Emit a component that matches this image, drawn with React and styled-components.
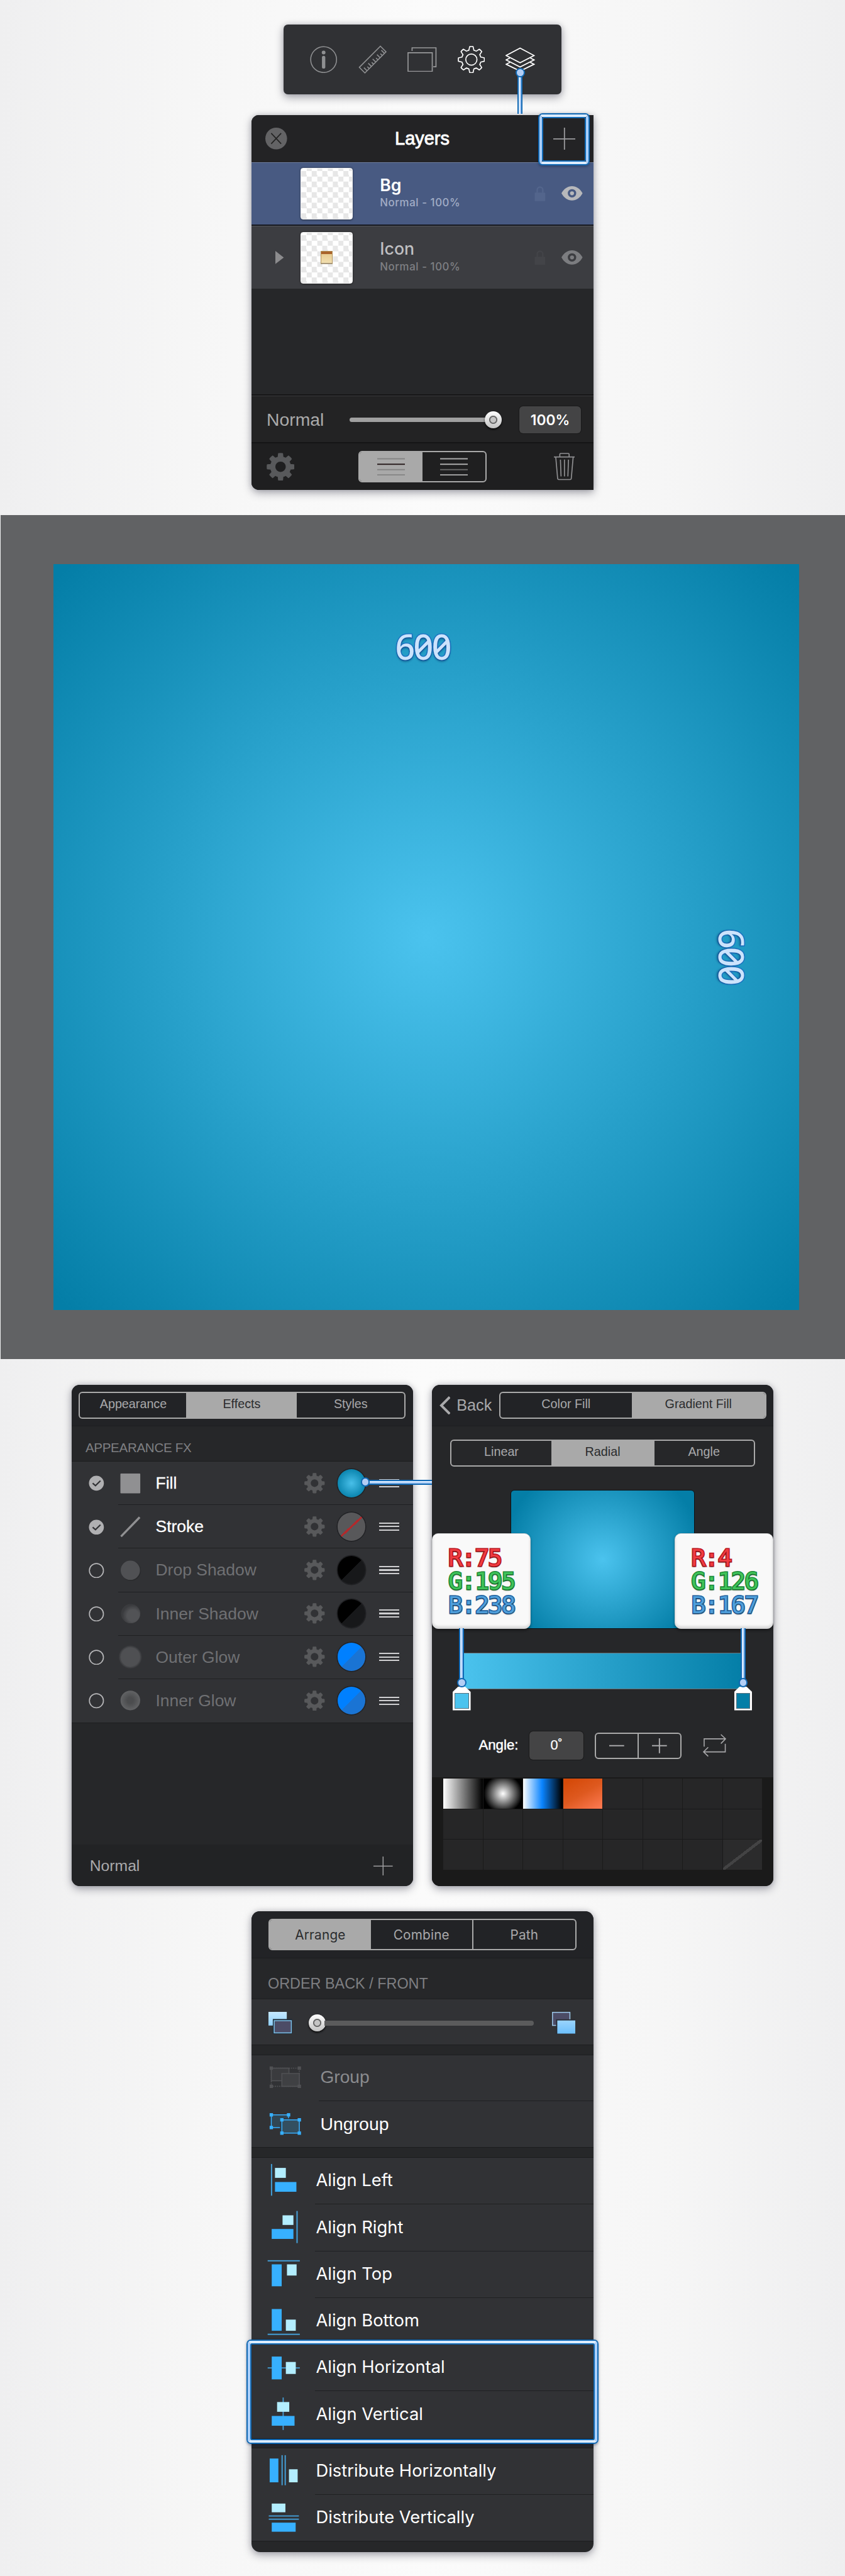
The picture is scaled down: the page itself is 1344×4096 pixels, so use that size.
import React from 'react';
import styled, { createGlobalStyle, css } from 'styled-components';

const HELV = '"Liberation Sans", Arial, sans-serif';
const INTER = 'Inter, "Open Sans", sans-serif';

const GlobalStyle = createGlobalStyle`
  html, body { margin: 0; padding: 0; background: #f6f6f6; }
  *, *::before, *::after { box-sizing: border-box; }
`;

const Page = styled.main`
  zoom: 0.98824;
  width: 1360px;
  height: 4145px;
  overflow: hidden;
  display: flex;
  flex-direction: column;
  background: linear-gradient(90deg, #efeff0 0%, #f6f6f6 22%, #fbfbfb 50%, #f6f6f6 78%, #efeff0 100%);
  font-family: ${HELV};
  color: #fff;
  white-space: nowrap;
  svg { display: block; flex: none; }
`;

/* ---------- shared parts ---------- */

const Panel = styled.section`
  position: relative;
  width: 550px;
  height: ${p => p.$h}px;
  flex: none;
  display: flex;
  flex-direction: column;
  background: #262729;
  border-radius: ${p => p.$radius || '13px'};
  box-shadow: 0 5px 14px rgba(20, 20, 40, 0.34), 0 0 9px rgba(20, 20, 40, 0.14);
`;

const Segmented = styled.div`
  display: flex;
  flex: none;
  width: ${p => p.$w}px;
  height: ${p => p.$h || 43.5}px;
  border: 2.05px solid #a9a9a9;
  border-radius: 6px;
  overflow: hidden;
  font-family: ${p => p.$font || HELV};
  font-size: ${p => p.$size || 20}px;
  letter-spacing: ${p => p.$track || 0}px;
`;

const Segment = styled.div`
  flex: ${p => p.$flex || '1 1 0'};
  display: flex;
  align-items: center;
  justify-content: center;
  padding-bottom: ${p => p.$lift ?? 3}px;
  background: ${p => (p.$on ? '#a9a9a9' : 'transparent')};
  color: ${p => (p.$on ? '#2b2c2e' : '#a9a9ab')};
  ${p => p.$divided && css`border-left: 2.05px solid #a9a9a9;`}
`;

const Highlight = styled.div`
  position: absolute;
  left: ${p => p.$x}px;
  top: ${p => p.$y}px;
  width: ${p => p.$w}px;
  height: ${p => p.$h}px;
  border: 2.05px solid #1068b3;
  border-radius: 7px;
  box-shadow: 0 2px 4px rgba(0, 20, 60, 0.35);
  pointer-events: none;
  &::before {
    content: '';
    position: absolute;
    inset: 0;
    border: 4.1px solid #a9cffb;
    border-top-color: #dcecff;
    border-bottom-color: #dcecff;
    border-radius: 5px;
  }
  &::after {
    content: '';
    position: absolute;
    inset: 4.05px;
    border: 2.05px solid #1068b3;
    border-radius: 3px;
  }
`;

const Connector = styled.div`
  position: absolute;
  z-index: 3;
  left: ${p => p.$x}px;
  top: ${p => p.$y}px;
  width: ${p => (p.$across ? p.$len : 8)}px;
  height: ${p => (p.$across ? 8 : p.$len)}px;
  background: linear-gradient(${p => (p.$across ? '180deg' : '90deg')},
    #1068b3 0 1.6px, #dcecff 1.6px 4px, #a6c9f6 4px 6.4px, #1068b3 6.4px 8px);
  &::before {
    content: '';
    position: absolute;
    width: 15px;
    height: 15px;
    border-radius: 50%;
    background: #b3cef5;
    border: 2.05px solid #1068b3;
    ${p => p.$across && css`left: -7px; top: -3.5px;`}
    ${p => !p.$across && css`left: -3.5px; ${p.$end ? 'bottom' : 'top'}: -7px;`}
  }
`;

const Knob = styled.div`
  width: 27px;
  height: 27px;
  flex: none;
  border-radius: 50%;
  background:
    radial-gradient(circle, #c4c4c4 0 4.2px, #6b6b6b 5px 6.3px, transparent 7px),
    linear-gradient(#ffffff, #c2c2c2);
  box-shadow: 0 2px 3px rgba(0, 0, 0, 0.8);
`;

function gearPath(cx, cy, outer, inner, tip, base) {
  const pt = (r, a) => `${(cx + r * Math.sin(a)).toFixed(2)} ${(cy - r * Math.cos(a)).toFixed(2)}`;
  let d = '';
  for (let i = 0; i < 8; i += 1) {
    const a = (i * Math.PI) / 4;
    d += `${i ? 'L' : 'M'}${pt(inner, a - base)}L${pt(outer, a - tip)}`;
    d += `A${outer} ${outer} 0 0 1 ${pt(outer, a + tip)}L${pt(inner, a + base)}`;
    const b = a + Math.PI / 4;
    d += `A${inner} ${inner} 0 0 1 ${pt(inner, b - base)}`;
  }
  return `${d}Z`;
}

const SolidGear = ({ size, color = '#58595b' }) => (
  <svg width={size} height={size} viewBox="0 0 44 44">
    <path
      fillRule="evenodd"
      fill={color}
      stroke={color}
      strokeWidth="1.6"
      strokeLinejoin="round"
      d={`${gearPath(22, 22, 21, 15.6, 0.15, 0.24)}M31 22a9 9 0 1 0-18 0a9 9 0 1 0 18 0Z`}
    />
  </svg>
);

const PlusIcon = ({ size }) => (
  <svg width={size} height={size} viewBox="0 0 36 36" stroke="#9c9c9e" strokeWidth="1.8">
    <path d="M18 0V36M0 18H36" />
  </svg>
);

/* ---------- toolbar and layers ---------- */

const LayersStage = styled.div`
  position: relative;
  flex: none;
  height: 829px;
  padding-top: 39px;
  display: flex;
  flex-direction: column;
  align-items: center;
  gap: 33px;
`;

const Toolbar = styled.nav`
  width: 448px;
  height: 113px;
  flex: none;
  display: flex;
  align-items: center;
  justify-content: space-between;
  padding: 0 43px 0 43px;
  border-radius: 7px;
  background: #303134;
  box-shadow: 0 5px 14px rgba(20, 20, 40, 0.36), 0 0 9px rgba(20, 20, 40, 0.12);
`;

const LayersHeader = styled.header`
  height: 76px;
  flex: none;
  display: flex;
  align-items: center;
  justify-content: space-between;
  padding: 0 29px 0 22px;
  background: #232325;
  border-radius: 12px 0 0 0;
`;

const PanelTitle = styled.h1`
  margin: 0 0 0 7px;
  font-size: 29.3px;
  font-weight: 400;
  -webkit-text-stroke: 0.9px #fff;
`;

const LayerRow = styled.div`
  height: ${p => p.$h}px;
  flex: none;
  display: flex;
  align-items: center;
  padding: 0 17px 0 38px;
  background: ${p => (p.$selected ? '#485a82' : '#3c3d41')};
  border-top: 1px solid ${p => (p.$selected ? '#6e7ea1' : '#55565a')};
  border-bottom: ${p => (p.$selected ? '2.05px solid #15181f' : '0')};
  color: ${p => (p.$selected ? '#fff' : '#bfbfc1')};
`;

const Disclosure = styled.div`
  width: 41px;
  flex: none;
`;

const Thumb = styled.div`
  width: 83.5px;
  height: 83px;
  flex: none;
  display: flex;
  align-items: center;
  justify-content: center;
  border-radius: 4px;
  background: repeating-conic-gradient(#fff 0 25%, #e7e7e7 0 50%) 0 4px / 17px 17px;
  border: 1px solid #f4f4f4;
  box-shadow: 0 1px 3px rgba(0, 0, 0, 0.5);
`;

const Carton = styled.div`
  width: 20px;
  height: 21px;
  border: 1px solid #b4945b;
  border-bottom: 2.05px solid #a8987a;
  background: linear-gradient(#a9632a 0 4px, #e8cd94 4px, #f1deae);
`;

const LayerText = styled.div`
  flex: 1;
  display: flex;
  flex-direction: column;
  gap: 5px;
  padding: 0 0 2px 44px;
  font-family: ${INTER};
`;

const LayerName = styled.div`
  font-size: 27px;
  line-height: 28px;
  font-weight: ${p => (p.$selected ? 600 : 500)};
`;

const LayerMeta = styled.div`
  font-size: 17px;
  line-height: 20px;
  font-weight: 500;
  letter-spacing: 0.6px;
  color: ${p => (p.$selected ? '#a2adc6' : '#7f8084')};
`;

const RowIcons = styled.div`
  display: flex;
  align-items: center;
  gap: 26px;
`;

const Filler = styled.div`
  flex: 1;
`;

const BlendBar = styled.div`
  height: 74px;
  flex: none;
  display: flex;
  align-items: center;
  padding: 2px 19px 0 24px;
  background: #232324;
  border-top: 1px solid #3a3b3d;
  box-shadow: 0 -2px 0 #161617;
  color: #aaa;
  font-size: 28.7px;
`;

const OpacityTrack = styled.div`
  margin-left: 41px;
  width: 245px;
  display: flex;
  align-items: center;
  &::before {
    content: '';
    width: 222px;
    height: 7.5px;
    flex: none;
    margin-right: -4px;
    border-radius: 4px;
    background: #a0a0a0;
  }
`;

const ValueBox = styled.div`
  display: flex;
  align-items: center;
  justify-content: center;
  flex: none;
  width: ${p => p.$w}px;
  height: ${p => p.$h}px;
  margin-left: ${p => p.$gap}px;
  border-radius: 6px;
  background: #444445;
  box-shadow: 0 0 0 1px #1a1a1b;
  color: #fff;
  font-family: ${INTER};
  font-size: ${p => p.$size}px;
  font-weight: ${p => p.$weight};
`;

const LayerActions = styled.footer`
  height: 77px;
  flex: none;
  display: flex;
  align-items: center;
  justify-content: space-between;
  padding: 1px 30px 0 24px;
  background: #1f1f20;
  border-top: 2.05px solid #151516;
  border-radius: 0 0 0 12px;
`;

const ViewSwitch = styled(Segmented)`
  margin-right: 5px;
`;

const Lines = ({ colors }) => (
  <svg width="45" height="29" viewBox="0 0 45 29">
    {colors.map((c, i) => (
      <rect key={i} x="0" y={[0.5, 9.3, 18, 26.5][i]} width="45" height="2" fill={c} />
    ))}
  </svg>
);

const Lock = ({ color }) => (
  <svg width="18" height="24" viewBox="0 0 18 24">
    <path d="M4.5 11V6a4.5 4.5 0 0 1 9 0V11" fill="none" stroke={color} strokeWidth="2.4" />
    <rect x="0.5" y="10.5" width="17" height="13.5" rx="1" fill={color} />
  </svg>
);

const Eye = ({ color }) => (
  <svg width="34" height="23" viewBox="0 0 34 23">
    <path
      fillRule="evenodd"
      fill={color}
      d="M0 11.5C4 4 10 0 17 0S30 4 34 11.5C30 19 24 23 17 23S4 19 0 11.5ZM17 4.7a6.8 6.8 0 1 0 0 13.6a6.8 6.8 0 1 0 0-13.6Z"
    />
    <circle cx="17" cy="11.5" r="3.2" fill={color} />
  </svg>
);

const LayersPanel = () => (
  <Panel $h={603} $radius="12px 0 0 12px">
    <LayersHeader>
      <svg width="35" height="35" viewBox="0 0 35 35">
        <circle cx="17.5" cy="17.5" r="17.5" fill="#636365" />
        <path d="M9.5 9L25.5 26M25.5 9L9.5 26" stroke="#222" strokeWidth="1.7" />
      </svg>
      <PanelTitle>Layers</PanelTitle>
      <PlusIcon size={36} />
    </LayersHeader>
    <Highlight $x={461.5} $y={-3} $w={83} $h={84} />
    <LayerRow $selected $h={102}>
      <Disclosure />
      <Thumb />
      <LayerText>
        <LayerName $selected>Bg</LayerName>
        <LayerMeta $selected>Normal - 100%</LayerMeta>
      </LayerText>
      <RowIcons>
        <Lock color="#53658c" />
        <Eye color="#b7b8bb" />
      </RowIcons>
    </LayerRow>
    <LayerRow $h={102}>
      <Disclosure>
        <svg width="14" height="21" viewBox="0 0 14 21"><path d="M0 0L13.5 10.5L0 21Z" fill="#8c8c8e" /></svg>
      </Disclosure>
      <Thumb><Carton /></Thumb>
      <LayerText>
        <LayerName>Icon</LayerName>
        <LayerMeta>Normal - 100%</LayerMeta>
      </LayerText>
      <RowIcons>
        <Lock color="#434448" />
        <Eye color="#7c7d80" />
      </RowIcons>
    </LayerRow>
    <Filler />
    <BlendBar>
      Normal
      <OpacityTrack><Knob /></OpacityTrack>
      <ValueBox $w={100} $h={43} $gap={28} $size={23} $weight={600}>100%</ValueBox>
    </BlendBar>
    <LayerActions>
      <SolidGear size={45} />
      <ViewSwitch $w={206} $h={50}>
        <Segment $on $lift={0}><Lines colors={['#858585', '#2c2021', '#858585', '#858585']} /></Segment>
        <Segment $lift={0}><Lines colors={['#ababab', '#ababab', '#666', '#ababab']} /></Segment>
      </ViewSwitch>
      <svg width="34" height="44" viewBox="0 0 34 44" fill="none" stroke="#909092" strokeWidth="1.7">
        <path d="M0 6.7H34M9.5 6V2.5Q9.5 1 11 1H23Q24.5 1 24.5 2.5V6M3 7L6 41Q6.2 43 8 43H26Q27.8 43 28 41L31 7M10.5 11L11.5 38M17 11V38M23.5 11L22.5 38" />
      </svg>
    </LayerActions>
  </Panel>
);

const ToolbarIcons = () => (
  <>
    <svg width="44" height="44" viewBox="0 0 44 44">
      <circle cx="22" cy="22" r="20.8" fill="none" stroke="#8f9092" strokeWidth="1.6" />
      <circle cx="22" cy="10.6" r="3" fill="#8f9092" />
      <rect x="19.3" y="16" width="5.4" height="20.5" rx="2.7" fill="#8f9092" />
    </svg>
    <svg width="46" height="46" viewBox="0 0 46 46" fill="none" stroke="#8f9092" strokeWidth="1.6">
      <path d="M35.5 1.5L44.5 10.5L10.5 44.5L1.5 35.5Z" />
      <path d="M14 41L9 36M17.5 37.5L14.5 34.500M21 34L16 29M24.500 30.500L21.500 27.500M28 27L23 22M31.500 23.500L28.500 20.500M35 20L30 15M38.500 16.500L35.500 13.500M42 13L37 8" />
    </svg>
    <svg width="47" height="40" viewBox="0 0 47 40" fill="none" stroke="#98999b" strokeWidth="1.7">
      <path d="M1 9H40V39H1ZM7.5 6V1H46V31.5H41.5" />
    </svg>
    <svg width="44" height="44" viewBox="0 0 44 44" fill="none" stroke="#fff" strokeWidth="1.7" strokeLinejoin="round">
      <path d={gearPath(22, 22, 21, 15.6, 0.13, 0.26)} />
      <circle cx="22" cy="22" r="9" />
    </svg>
    <svg width="47" height="42" viewBox="0 0 47 42" fill="none" stroke="#fff" strokeWidth="1.8">
      <path d="M23.5 2.5L46 14.5L23.5 26L1 14.5Z" />
      <path d="M7 18.5L1 21.5L23.5 33L46 21.5L40 18.5M7 25.5L1 28.5L23.5 39.5L46 28.5L40 25.5" />
    </svg>
  </>
);

/* ---------- artboard ---------- */

const CanvasStage = styled.div`
  flex: none;
  height: 1358px;
  margin-left: 1px;
  padding: 79px 0 0 85px;
  background: #616264;
`;

const Artboard = styled.div`
  position: relative;
  width: 1200px;
  height: 1200px;
  background: radial-gradient(circle farthest-corner at 50% 50%, #4bc3ee 0%, #047ea7 98%);
`;

const Dimension = styled.span`
  position: absolute;
  left: ${p => p.$x}px;
  top: ${p => p.$y}px;
  font: 500 56px/60px "Noto Sans", sans-serif;
  font-feature-settings: "zero";
  letter-spacing: -2.6px;
  color: #cce3fc;
  -webkit-text-stroke: 3.2px #1c74c2;
  paint-order: stroke fill;
  text-shadow: 0 3px 3px rgba(0, 40, 90, 0.4);
  ${p => p.$vertical && css`writing-mode: vertical-rl;`}
`;

/* ---------- effects panel ---------- */

const PanelsStage = styled.div`
  position: relative;
  flex: none;
  display: flex;
  justify-content: center;
  gap: 30px;
  padding-top: 41px;
`;

const TabHeader = styled.header`
  height: ${p => p.$h || 67}px;
  flex: none;
  display: flex;
  align-items: center;
  justify-content: space-between;
  padding: 0 ${p => p.$pad || 12}px;
  background: #222326;
  border-bottom: 1px solid #1d1e20;
  border-radius: 13px 13px 0 0;
`;

const SectionLabel = styled.h2`
  margin: 0;
  flex: none;
  height: ${p => p.$h}px;
  padding: ${p => p.$top}px 0 0 ${p => p.$left}px;
  display: flex;
  align-items: center;
  font-weight: 400;
  font-size: ${p => p.$size}px;
  letter-spacing: ${p => p.$track || 0}px;
  color: #7e7f82;
`;

const EffectList = styled.div`
  flex: none;
  display: flex;
  flex-direction: column;
  background: #313235;
  border-top: 1px solid #1c1d1f;
  border-bottom: 1px solid #1c1d1f;
`;

const EffectRow = styled.div`
  height: 69.9px;
  display: flex;
  align-items: center;
  padding-left: 28px;
`;

const EffectBody = styled.div`
  flex: 1;
  height: 100%;
  margin-left: 22px;
  padding: 0 22px 0 3px;
  display: flex;
  align-items: center;
  border-bottom: ${p => (p.$last ? '0' : '1px solid #1f2022')};
`;

const EffectName = styled.span`
  flex: 1;
  padding: 1px 0 0 24.5px;
  font-size: 26.8px;
  color: ${p => (p.$active ? '#fff' : '#6f7073')};
  ${p => p.$active && css`-webkit-text-stroke: 0.3px #fff;`}
`;

const Swatch = styled.div`
  width: 45px;
  height: 45px;
  flex: none;
  margin: 0 22px 0 20px;
  border-radius: 50%;
  background: ${p => p.$fill};
  box-shadow: 0 0 0 1.5px #202124;
`;

const Grip = styled.div`
  width: 33px;
  height: 13px;
  flex: none;
  border: solid #cfcfd1;
  border-width: 2.4px 0;
  display: flex;
  align-items: center;
  &::before { content: ''; width: 100%; height: 2.2px; background: #cfcfd1; }
`;

const BottomBar = styled.footer`
  height: 67px;
  flex: none;
  display: flex;
  align-items: center;
  justify-content: space-between;
  padding: 2px 33px 0 29.5px;
  background: #222325;
  border-radius: 0 0 13px 13px;
  font-size: 25px;
  color: #a9a9ab;
`;

const Check = ({ on }) => (
  <svg width="25" height="25" viewBox="0 0 25 25">
    {on ? (
      <>
        <circle cx="12.5" cy="12.5" r="12" fill="#b0b0b2" />
        <path d="M6.5 12.5L11 16.5L19 8.5" fill="none" stroke="#313235" strokeWidth="2.2" />
      </>
    ) : (
      <circle cx="12.5" cy="12.5" r="11.3" fill="none" stroke="#b6b6b8" strokeWidth="1.7" />
    )}
  </svg>
);

const Glyph = ({ kind }) => (
  <svg width="33" height="34" viewBox="0 0 33 34" overflow="visible">
    <defs>
      <radialGradient id="innerShadow" cx="0.62" cy="0.6" r="0.55">
        <stop offset="0.55" stopColor="#525356" />
        <stop offset="1" stopColor="#3a3b3e" />
      </radialGradient>
      <radialGradient id="outerGlow">
        <stop offset="0.78" stopColor="#4f5053" />
        <stop offset="1" stopColor="#4f5053" stopOpacity="0" />
      </radialGradient>
      <radialGradient id="innerGlow">
        <stop offset="0.3" stopColor="#4b4c4e" />
        <stop offset="1" stopColor="#626365" />
      </radialGradient>
    </defs>
    {kind === 'fill' && <rect x="0.5" y="1" width="32" height="32" rx="1" fill="#909092" />}
    {kind === 'stroke' && <path d="M1.5 32.5L31.5 1.5" stroke="#909092" strokeWidth="3.4" />}
    {kind === 'drop' && (
      <>
        <circle cx="17.5" cy="18" r="16" fill="#2a2b2d" />
        <circle cx="16.5" cy="17" r="15.5" fill="#505154" />
      </>
    )}
    {kind === 'inner' && <circle cx="17" cy="17" r="15.5" fill="url(#innerShadow)" />}
    {kind === 'outer' && <circle cx="16.5" cy="17" r="19" fill="url(#outerGlow)" />}
    {kind === 'glow' && <circle cx="16.5" cy="17" r="15.8" fill="url(#innerGlow)" />}
  </svg>
);

const BLACK = 'linear-gradient(135deg, #000 50%, #17181a 50%)';
const BLUE = 'linear-gradient(135deg, #0080ff 50%, #1a74d4 50%)';
const EFFECTS = [
  { name: 'Fill', kind: 'fill', on: true, fill: 'radial-gradient(circle closest-side, #48bfe9, #0c86b0)' },
  { name: 'Stroke', kind: 'stroke', on: true, fill: 'linear-gradient(137deg, #58585a 47.5%, #b02a2d 47.5% 52.5%, #58585a 52.5%)' },
  { name: 'Drop Shadow', kind: 'drop', fill: BLACK },
  { name: 'Inner Shadow', kind: 'inner', fill: BLACK },
  { name: 'Outer Glow', kind: 'outer', fill: BLUE },
  { name: 'Inner Glow', kind: 'glow', fill: BLUE },
];

const EffectsPanel = () => (
  <Panel $h={807}>
    <TabHeader>
      <Segmented $w={526}>
        <Segment $flex="0 0 171px">Appearance</Segment>
        <Segment $on $flex="0 0 178px">Effects</Segment>
        <Segment>Styles</Segment>
      </Segmented>
    </TabHeader>
    <SectionLabel $h={56} $top={12} $left={22.5} $size={20.8} $track={-0.3}>APPEARANCE FX</SectionLabel>
    <EffectList>
      {EFFECTS.map((e, i) => (
        <EffectRow key={e.name}>
          <Check on={e.on} />
          <EffectBody $last={i === EFFECTS.length - 1}>
            <Glyph kind={e.kind} />
            <EffectName $active={e.on}>{e.name}</EffectName>
            <SolidGear size={33} />
            <Swatch $fill={e.fill} />
            <Grip />
          </EffectBody>
        </EffectRow>
      ))}
    </EffectList>
    <Filler />
    <BottomBar>
      Normal
      <PlusIcon size={31} />
    </BottomBar>
  </Panel>
);

/* ---------- gradient panel ---------- */

const BackButton = styled.div`
  display: flex;
  align-items: center;
  gap: 10px;
  font-size: 25.5px;
  color: #a9a9ab;
`;

const GradientBody = styled.div`
  flex: 1;
  display: flex;
  flex-direction: column;
  align-items: center;
  padding-top: 21px;
`;

const Preview = styled.div`
  width: 297px;
  height: 223px;
  flex: none;
  margin-top: 38px;
  border: 1px solid #0d1013;
  border-radius: 6px;
  background: radial-gradient(circle 162px at 50% 50%, #4bc3ee, #047ea7);
`;

const GradientBar = styled.div`
  width: 453px;
  height: 59px;
  flex: none;
  margin: 39px 0 0 -1px;
  border: solid #6b7378;
  border-width: 1.5px 0;
  background: linear-gradient(90deg, #4bc3ee, #047ea7);
`;

const AngleRow = styled.div`
  width: 398px;
  height: 46px;
  flex: none;
  display: flex;
  align-items: center;
  margin: 67px 0 28px -1px;
  font-size: 22.5px;
  -webkit-text-stroke: 0.5px #fff;
`;

const AngleValue = styled(ValueBox)`
  font-family: ${HELV};
  -webkit-text-stroke: 0.2px #fff;
`;

const Stepper = styled(Segmented)`
  margin: 1px 34px 0 18px;
`;

const Palette = styled.div`
  flex: 1;
  align-self: stretch;
  padding: 2.5px 18.5px 0;
  background: #1a1a1a;
  border-radius: 0 0 13px 13px;
`;

const PaletteGrid = styled.div`
  display: grid;
  grid-template-columns: repeat(8, 1fr);
  grid-auto-rows: 48.2px;
  gap: 1px;
`;

const Cell = styled.div`
  background: ${p => p.$fill || '#262627'};
`;

const CELLS = [
  'linear-gradient(90deg, #fff, #000)',
  'radial-gradient(circle 31px, #fff, #000)',
  'linear-gradient(90deg, #fff, #0a84ff 48%, #000 98%)',
  'linear-gradient(150deg, #d54a09 10%, #de591f 50%, #ff7b54)',
];

const ColorCard = styled.div`
  position: absolute;
  z-index: 2;
  left: ${p => p.$x}px;
  top: 239px;
  width: 159px;
  height: 154px;
  padding: 20px 0 0 25.5px;
  border-radius: 10px;
  background: #f9f9f9;
  border: 1px solid #cfd0d2;
  box-shadow: inset 0 2px 0 #fff, inset 0 -3px 4px #d8d8d8, 0 3px 4px rgba(0, 0, 0, 0.35);
`;

const Channel = styled.div`
  font: 400 38.5px/38px "DejaVu Sans Mono", monospace;
  letter-spacing: -1.8px;
  color: ${p => p.$fill};
  -webkit-text-stroke: 3.2px ${p => p.$edge};
  paint-order: stroke fill;
  text-shadow: 0 2px 2px rgba(0, 0, 0, 0.3);
`;

const StopHandle = styled.div`
  position: absolute;
  left: ${p => p.$x}px;
  top: 486px;
  width: 29px;
  height: 38px;
  padding: 10px 3px 3px;
  background: #fff;
  clip-path: polygon(30% 0, 70% 0, 100% 22%, 100% 100%, 0 100%, 0 22%);
  &::before {
    content: '';
    display: block;
    height: 100%;
    border: 1px solid #56707c;
    background: ${p => p.$fill};
  }
`;

const RgbCard = ({ x, r, g, b }) => (
  <ColorCard $x={x}>
    <Channel $fill="#f03c41" $edge="#b9151d">R:{r}</Channel>
    <Channel $fill="#40c35a" $edge="#1b8a36">G:{g}</Channel>
    <Channel $fill="#4f9fdb" $edge="#205f9c">B:{b}</Channel>
  </ColorCard>
);

const GradientPanel = () => (
  <Panel $h={807}>
    <TabHeader>
      <BackButton>
        <svg width="18" height="30" viewBox="0 0 18 30"><path d="M16.5 1.5L3 15L16.5 28.5" fill="none" stroke="#a9a9ab" strokeWidth="4" /></svg>
        Back
      </BackButton>
      <Segmented $w={430}>
        <Segment $flex="0 0 212px">Color Fill</Segment>
        <Segment $on>Gradient Fill</Segment>
      </Segmented>
    </TabHeader>
    <GradientBody>
      <Segmented $w={490}>
        <Segment $flex="0 0 160px">Linear</Segment>
        <Segment $on $flex="0 0 166px">Radial</Segment>
        <Segment>Angle</Segment>
      </Segmented>
      <Preview />
      <GradientBar />
      <AngleRow>
        Angle:
        <AngleValue $w={87} $h={46} $gap={18} $size={22} $weight={400}>0˚</AngleValue>
        <Stepper $w={140} $h={43}>
          <Segment $lift={0}><svg width="24" height="24" stroke="#a9a9ab" strokeWidth="2"><path d="M0 12H24" /></svg></Segment>
          <Segment $divided $lift={0}><svg width="24" height="24" stroke="#a9a9ab" strokeWidth="2"><path d="M0 12H24M12 0V24" /></svg></Segment>
        </Stepper>
        <svg width="38" height="37" viewBox="0 0 38 37" fill="none" stroke="#a9a9ab" strokeWidth="1.6">
          <path d="M2 20.5V8H36M29 1L36.5 8L29 15.5M36 16V29H1.5M8.5 21.5L1 29L8.5 36" />
        </svg>
      </AngleRow>
      <Palette>
        <PaletteGrid>
          {Array.from({ length: 23 }, (_, i) => <Cell key={i} $fill={CELLS[i]} />)}
          <Cell $fill="linear-gradient(142.5deg, #2b2b2c 47%, #434344 47% 53%, #2b2b2c 53%)" />
        </PaletteGrid>
      </Palette>
    </GradientBody>
    <StopHandle $x={33.5} $fill="#4bc3ee" />
    <StopHandle $x={486.5} $fill="#047ea7" />
    <Connector $x={44} $y={392} $len={88} $end />
    <Connector $x={497} $y={392} $len={88} $end />
    <RgbCard x={0} r="75" g="195" b="238" />
    <RgbCard x={391} r="4" g="126" b="167" />
  </Panel>
);

/* ---------- arrange panel ---------- */

const ArrangeStage = styled.div`
  flex: none;
  display: flex;
  justify-content: center;
  padding-top: 40px;
`;

const Group = styled.div`
  flex: none;
  margin-bottom: ${p => p.$gap}px;
  background: #313235;
  border-top: 1px solid #1c1d1f;
  border-bottom: 1px solid #1c1d1f;
`;

const OrderRow = styled.div`
  height: 72.5px;
  display: flex;
  align-items: center;
  justify-content: space-between;
  padding: 3px 29px 0 27.5px;
`;

const OrderTrack = styled.div`
  width: 362px;
  display: flex;
  align-items: center;
  margin-left: -3px;
  &::after {
    content: '';
    flex: 1;
    height: 7.5px;
    margin: 1px 0 0 -2px;
    border-radius: 0 4px 4px 0;
    background: #5b5b5c;
  }
`;

const MenuRow = styled.div`
  height: ${p => p.$h}px;
  padding-left: 25px;
  display: flex;
`;

const MenuLabel = styled.span`
  flex: 1;
  display: flex;
  align-items: center;
  margin-left: ${p => p.$indent}px;
  padding: 0 0 ${p => p.$lift || 1}px 2px;
  font-family: ${p => p.$font || HELV};
  font-size: ${p => p.$size}px;
  letter-spacing: ${p => p.$track || 0}px;
  color: ${p => (p.$dim ? '#8a8b8e' : '#fff')};
  border-bottom: ${p => (p.$last ? '0' : '1px solid #1f2022')};
`;

const B = '#37b0ff';
const L = '#b3eeff';
const T = '#449ed6';
const ALIGN = [
  ['Align Left', [[6, 10, 2, 51, T], [12.5, 16.3, 17.5, 16, L], [12.5, 39, 34.5, 15.7, B]]],
  ['Align Right', [[47, 10.7, 2.1, 51.7, T], [24.7, 17.7, 17.5, 15.5, L], [7.2, 39.7, 35, 16, B]]],
  ['Align Top', [[0.7, 14, 51.8, 2, T], [7.3, 20.7, 16, 35.3, B], [31.8, 20.7, 15.5, 18, L]]],
  ['Align Bottom', [[0.7, 57.4, 51.8, 2, T], [7.3, 17.7, 16, 35, B], [30, 34.7, 16, 18, L]]],
  ['Align Horizontal', [[0.7, 36.7, 51.8, 1.8, T], [7.3, 19.3, 16, 36.7, B], [30, 28, 16, 19.3, L]]],
  ['Align Vertical', [[24.8, 10.3, 1.8, 52.3, T], [15.9, 17.6, 19.6, 15.7, L], [7.3, 40, 36.7, 15.7, B]]],
];
const DISTRIBUTE = [
  ['Distribute Horizontally', [[4, 16.4, 14, 38.3, B], [23, 11, 2, 48.4, T], [28, 11, 2, 48.4, T], [35, 33.7, 14, 21, L]]],
  ['Distribute Vertically', [[7.3, 14, 22, 14, L], [2.5, 33, 48.5, 1.9, T], [2.5, 38.2, 48.5, 1.9, T], [7.3, 44.7, 38.5, 14.6, B]]],
];

const RectIcon = ({ rects }) => (
  <svg width="56" height="75" viewBox="0 0 56 75">
    {rects.map(([x, y, w, h, fill], i) => <rect key={i} x={x} y={y} width={w} height={h} fill={fill} />)}
  </svg>
);

const Dots = ({ points, color }) => points.map(([x, y]) => (
  <rect key={`${x}-${y}`} x={x - 2.7} y={y - 2.7} width="5.4" height="5.4" fill={color} stroke="none" />
));

const GroupIcon = () => (
  <svg width="56" height="74" viewBox="0 0 56 74" stroke="#505154" strokeWidth="1.6">
    <path d="M6.6 20.7H51.7V50H6.6Z" fill="none" strokeDasharray="2 1.5" />
    <path d="M6.6 20.7H35V41H6.6Z" fill="#3a3b3e" />
    <path d="M23.6 29.3H51.7V50H23.6Z" fill="#3f4043" />
    <Dots points={[[6.6, 20.7], [51.7, 20.7], [6.6, 50], [51.7, 50]]} color="#505154" />
  </svg>
);

const UngroupIcon = () => (
  <svg width="56" height="75" viewBox="0 0 56 75">
    <path d="M6.6 22H34.4V42.4H6.6Z" fill="#304654" stroke={B} strokeWidth="1.5" />
    <path d="M20.5 27.5H36V48H20.5Z" fill="#2d3a44" />
    <path d="M23.6 30H51.7V51.4H23.6Z" fill="#334f60" stroke={B} strokeWidth="1.5" />
    <Dots points={[[6.6, 22], [34.4, 22], [6.6, 42.4], [23.6, 30], [51.7, 30], [23.6, 51.4], [51.7, 51.4]]} color={B} />
  </svg>
);

const BackIcon = () => (
  <svg width="38" height="36" viewBox="0 0 38 36">
    <defs>
      <linearGradient id="backFill" x1="0" y1="0" x2="0" y2="1">
        <stop offset="0" stopColor="#c5e8ff" />
        <stop offset="1" stopColor="#8fd0fc" />
      </linearGradient>
    </defs>
    <rect x="0" y="0" width="29.5" height="22" fill="url(#backFill)" />
    <rect x="7" y="11.5" width="31" height="24.5" fill="#1d2b38" />
    <rect x="9.2" y="14.2" width="27.6" height="19.6" fill="#4c4c66" stroke="#7cc0e8" strokeWidth="1.5" />
  </svg>
);

const FrontIcon = () => (
  <svg width="38" height="36" viewBox="0 0 38 36">
    <defs>
      <linearGradient id="frontFill" x1="0" y1="0" x2="0" y2="1">
        <stop offset="0" stopColor="#9ad4fd" />
        <stop offset="1" stopColor="#6cbffc" />
      </linearGradient>
    </defs>
    <rect x="0.8" y="0.8" width="28" height="21" fill="#4c4c66" stroke="#9dc9ea" strokeWidth="1.5" />
    <rect x="6.5" y="12" width="31" height="24" fill="#262b33" />
    <rect x="8.5" y="13.8" width="29.5" height="21.2" fill="url(#frontFill)" />
  </svg>
);

const ArrangePanel = () => (
  <Panel $h={1031} $radius="14px">
    <TabHeader $h={76.5} $pad={27.5}>
      <Segmented $w={495} $h={50} $font={INTER} $size={21} $track={0.2}>
        <Segment $on $lift={0} $flex="0 0 162px">Arrange</Segment>
        <Segment $lift={0}>Combine</Segment>
        <Segment $divided $lift={0}>Path</Segment>
      </Segmented>
    </TabHeader>
    <SectionLabel $h={64.5} $top={16} $left={26} $size={23.7}>ORDER BACK / FRONT</SectionLabel>
    <Group $gap={15}>
      <OrderRow>
        <BackIcon />
        <OrderTrack><Knob /></OrderTrack>
        <FrontIcon />
      </OrderRow>
    </Group>
    <Group $gap={15}>
      <MenuRow $h={74.2}>
        <GroupIcon />
        <MenuLabel $dim $indent={27.5} $size={28.5}>Group</MenuLabel>
      </MenuRow>
      <MenuRow $h={74.2}>
        <UngroupIcon />
        <MenuLabel $last $indent={27.5} $size={28.8}>Ungroup</MenuLabel>
      </MenuRow>
    </Group>
    <Group $gap={15}>
      {ALIGN.map(([label, rects], i) => (
        <MenuRow key={label} $h={75.15}>
          <RectIcon rects={rects} />
          <MenuLabel $last={i === 5} $lift={2.5} $indent={20.5} $font={INTER} $size={27.7}>{label}</MenuLabel>
        </MenuRow>
      ))}
    </Group>
    <Group $gap={0}>
      {DISTRIBUTE.map(([label, rects], i) => (
        <MenuRow key={label} $h={74.2}>
          <RectIcon rects={rects} />
          <MenuLabel $last={i === 1} $lift={3} $indent={20.5} $font={INTER} $size={27.7}>{label}</MenuLabel>
        </MenuRow>
      ))}
    </Group>
    <Highlight $x={-8} $y={689} $w={566} $h={168} />
  </Panel>
);

export default function App() {
  return (
    <>
      <GlobalStyle />
      <Page>
        <LayersStage>
          <Toolbar><ToolbarIcons /></Toolbar>
          <LayersPanel />
          <Connector $x={833.2} $y={116.5} $len={66.5} />
        </LayersStage>
        <CanvasStage>
          <Artboard>
            <Dimension $x={550} $y={102}>600</Dimension>
            <Dimension $vertical $x={1062} $y={587}>600</Dimension>
          </Artboard>
        </CanvasStage>
        <PanelsStage>
          <EffectsPanel />
          <GradientPanel />
          <Connector $across $x={587.5} $y={193.8} $len={107.5} />
        </PanelsStage>
        <ArrangeStage>
          <ArrangePanel />
        </ArrangeStage>
      </Page>
    </>
  );
}
